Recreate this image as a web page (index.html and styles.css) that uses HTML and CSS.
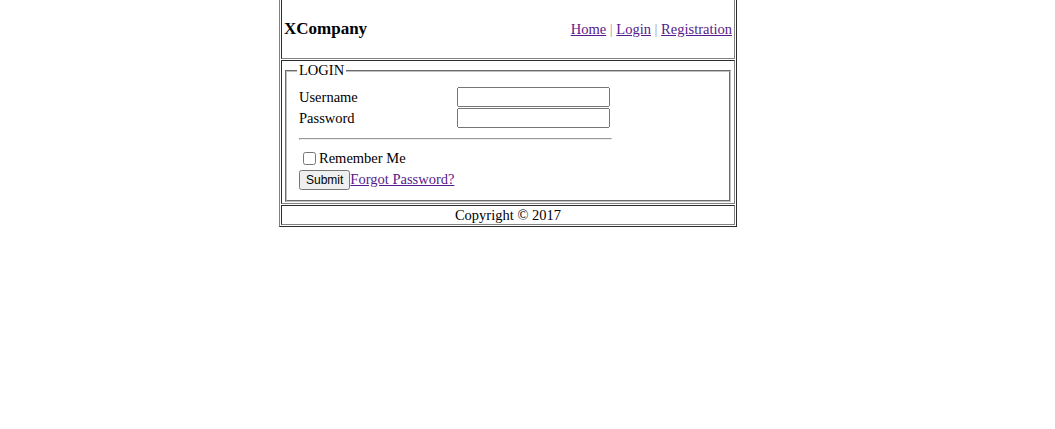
FILE: index.html
```html
<!DOCTYPE html>
<html>
<head>
<meta charset="utf-8">
<title>XCompany</title>
<link rel="stylesheet" href="styles.css">
</head>
<body>
<table class="page">
  <tr>
    <td class="cell">
      <div class="header">
        <h3 class="brand">XCompany</h3>
        <nav class="nav"><a href="#">Home</a> <span class="sep">|</span> <a href="#">Login</a> <span class="sep">|</span> <a href="#">Registration</a></nav>
      </div>
    </td>
  </tr>
  <tr>
    <td class="cell">
      <fieldset class="login">
        <legend class="legend">LOGIN</legend>
        <div class="fields">
          <label class="label" for="u">Username</label>
          <input class="input" id="u" type="text">
          <label class="label" for="p">Password</label>
          <input class="input" id="p" type="password">
        </div>
        <hr class="rule">
        <div class="remember"><input class="check" id="r" type="checkbox"><label for="r">Remember Me</label></div>
        <div class="actions"><button class="submit" type="submit">Submit</button><a href="#">Forgot Password?</a></div>
      </fieldset>
    </td>
  </tr>
  <tr>
    <td class="cell footer">Copyright © 2017</td>
  </tr>
</table>
</body>
</html>
```
FILE: styles.css
```css
html, body {
  margin: 0;
  background: #fff;
}
body {
  font-family: "Liberation Serif", "Times New Roman", serif;
  font-size: 14.5px;
  color: #000;
}
a { color: #551a8b; }
.page {
  width: 458px;
  margin: -3px 0 0 279px;
  border: 1px outset gray;
  border-spacing: 1px;
  border-collapse: separate;
}
.cell {
  border: 1px inset gray;
  padding: 1px;
}
.header {
  display: flex;
  justify-content: space-between;
  align-items: center;
}
.brand {
  font-size: 17px;
  font-weight: bold;
  margin: 18px 0;
  padding-left: 1px;
}
.nav { padding-right: 1px; }
.sep { color: #999; }
.login {
  margin: 0 2px;
  padding: 8px 12px 10px;
  border: 2px groove rgb(192,192,192);
}
.legend { padding: 0 2px; margin-left: -2px; }
.fields {
  display: grid;
  grid-template-columns: 158px 153px;
  row-gap: 1px;
  align-items: center;
  width: 311px;
}
.input {
  width: 153px;
  height: 20px;
  box-sizing: border-box;
  margin: 0;
}
.rule {
  width: 311px;
  margin: 10px 0 8px;
}
.remember { line-height: 20px; }
.check { margin: 3px 3px 3px 4px; vertical-align: -2px; }
.actions { margin-top: 2px; }
.submit { margin: 0; font-size: 12px; padding: 1px 5px; height: 20px; }
.footer { text-align: center; line-height: 16px; }
```
